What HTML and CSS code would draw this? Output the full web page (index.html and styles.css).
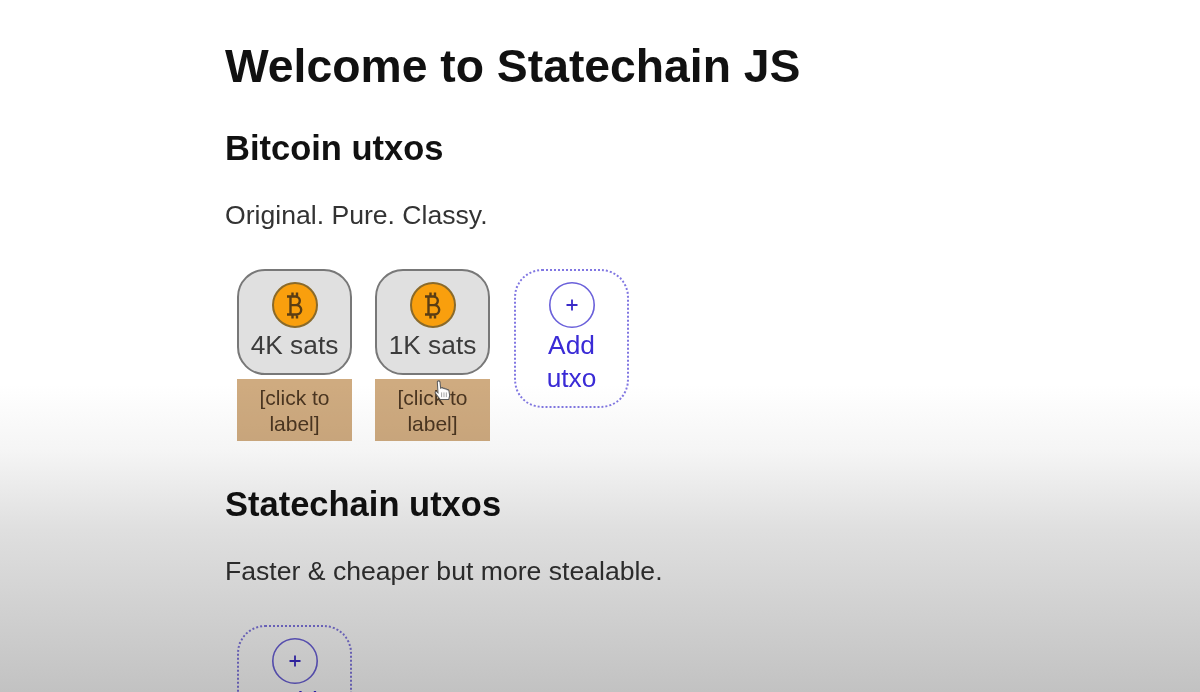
FILE: index.html
```html
<!DOCTYPE html>
<html lang="en">
<head>
    <meta charset="UTF-8">
    <title>Statechain JS</title>
    <link rel="stylesheet" href="styles.css">
</head>
<body>
    <main class="page">
        <h1>Welcome to Statechain JS</h1>

        <h2>Bitcoin utxos</h2>
        <p>Original. Pure. Classy.</p>
        <div class="utxos">
            <div class="utxo">
                <div class="coin">
                    <svg class="coin-icon" viewBox="0 0 46 46">
                        <circle cx="23" cy="23" r="22" fill="#f99f0d" stroke="#8a6a2a" stroke-width="2"/>
                        <path d="M18 14.500h5.500a4.200 4.200 0 0 1 0 8.600H18M18 23.100h6.500a4.600 4.600 0 0 1 0 9.400H18M18.500 14.500v18M15 14.500h3M15 32.500h3M20.500 10.500v4M25 10.500v4M20.500 32.500v4M25 32.500v4" fill="none" stroke="#5a3d14" stroke-width="2.400"/>
                    </svg>
                    <span>4K sats</span>
                </div>
                <div class="tag">[click to label]</div>
            </div>
            <div class="utxo">
                <div class="coin">
                    <svg class="coin-icon" viewBox="0 0 46 46">
                        <circle cx="23" cy="23" r="22" fill="#f99f0d" stroke="#8a6a2a" stroke-width="2"/>
                        <path d="M18 14.500h5.500a4.200 4.200 0 0 1 0 8.600H18M18 23.100h6.500a4.600 4.600 0 0 1 0 9.400H18M18.500 14.500v18M15 14.500h3M15 32.500h3M20.500 10.500v4M25 10.500v4M20.500 32.500v4M25 32.500v4" fill="none" stroke="#5a3d14" stroke-width="2.400"/>
                    </svg>
                    <span>1K sats</span>
                </div>
                <div class="tag">[click to label]</div>
            </div>
            <div class="utxo">
                <button class="add">
                    <svg class="coin-icon" viewBox="0 0 46 46">
                        <circle cx="23" cy="23" r="22.200" fill="none" stroke="#6a60da" stroke-width="1.600"/>
                        <path d="M17.500 23h11M23 17.500v11" fill="none" stroke="#3a2bc8" stroke-width="1.800"/>
                    </svg>
                    <span>Add utxo</span>
                </button>
            </div>
        </div>

        <h2>Statechain utxos</h2>
        <p>Faster &amp; cheaper but more stealable.</p>
        <div class="utxos">
            <div class="utxo">
                <button class="add">
                    <svg class="coin-icon" viewBox="0 0 46 46">
                        <circle cx="23" cy="23" r="22.200" fill="none" stroke="#6a60da" stroke-width="1.600"/>
                        <path d="M17.500 23h11M23 17.500v11" fill="none" stroke="#3a2bc8" stroke-width="1.800"/>
                    </svg>
                    <span>Add utxo</span>
                </button>
            </div>
        </div>
    </main>

    <!-- pointer over the second label -->
    <svg class="cursor" viewBox="0 0 20 22">
        <path d="M3.500 2c0-1.500 2.500-1.500 2.800 0l.7 6.500.8-.4c.9-.3 1.600 0 1.900.7.900-.5 1.800-.2 2.100.6.900-.4 1.800 0 2.100.8.800-.3 1.600.1 1.800 1l.8 5.300-1 4H6.500L1.500 14c-.7-1-.2-2.200 1-2l1.700 1.500z" fill="#fff" stroke="#5c5c5c" stroke-width="1.100"/>
        <path d="M8 13v5M10.500 13v5M13 13v5" fill="none" stroke="#8a8a8a" stroke-width="0.800"/>
    </svg>

    <div class="shade"></div>
</body>
</html>
```

FILE: styles.css
```css
html, body {
    height: 100%;
}
body {
    margin: 0;
    overflow: hidden;
    font-family: "Liberation Sans", Arial, sans-serif;
    color: #1d1d1d;
    background-color: white;
}
.page {
    padding: 38px 0 0 225px;
    filter: blur(0.4px);
}
h1 {
    margin: 0 0 35px 0;
    font-size: 46.300px;
    line-height: 56px;
    font-weight: bold;
    color: #111;
}
h2 {
    margin: 0 0 33px 0;
    font-size: 34.500px;
    line-height: 38px;
    font-weight: bold;
    color: #111;
}
p {
    margin: 0 0 39px 0;
    font-size: 26.600px;
    line-height: 30px;
    color: #333;
}
.utxos {
    display: flex;
    align-items: flex-start;
    gap: 23px;
    padding-left: 12px;
    margin-bottom: 44px;
}
.utxo {
    width: 115px;
}
.utxo:last-child {
    margin-left: 1px;
}
.utxos .utxo:only-child {
    margin-left: 0;
}
.coin, .add {
    display: flex;
    flex-direction: column;
    align-items: center;
    box-sizing: border-box;
    width: 115px;
    border-radius: 28px;
    font-family: inherit;
    font-size: 26.300px;
    line-height: 33px;
}
.coin {
    height: 106px;
    padding: 11px 4px;
    background-color: #e0e0e0;
    border: 2px solid #787878;
    color: #3b3b3b;
}
.add {
    padding: 11px 20px;
    background: none;
    border: 2px dotted #8177e2;
    color: #3a2bd6;
}
.coin-icon {
    display: block;
    flex: none;
    width: 46px;
    height: 46px;
    margin-bottom: 1px;
}
.tag {
    margin-top: 4px;
    padding: 6px 6px 4px;
    background-color: #cfab80;
    color: #4a3520;
    font-size: 21px;
    line-height: 26px;
    text-align: center;
}
.cursor {
    position: absolute;
    left: 434px;
    top: 380px;
    width: 19px;
    height: 21px;
}
.shade {
    position: absolute;
    inset: 0;
    pointer-events: none;
    mix-blend-mode: multiply;
    background: linear-gradient(to bottom, #fff 0, #fff 385px, #f5f5f5 450px, #dfdfdf 530px, #c2c2c2 692px);
}
```
